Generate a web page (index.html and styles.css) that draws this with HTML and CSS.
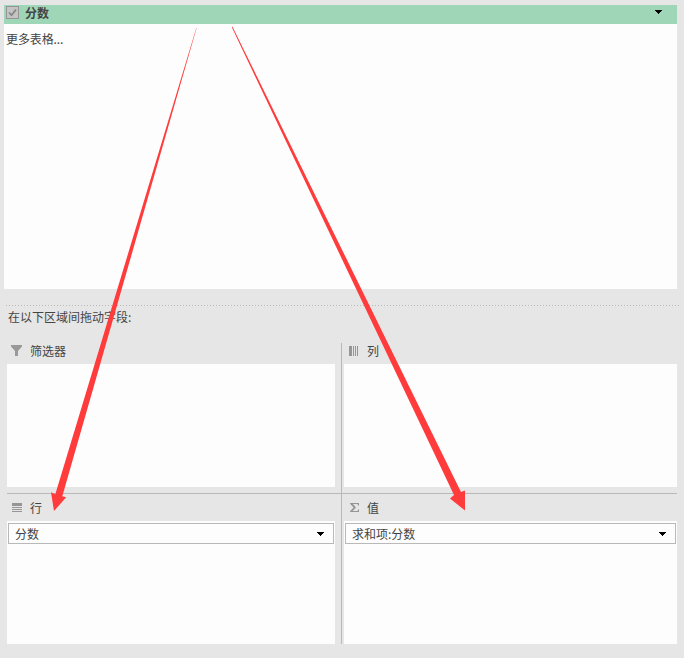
FILE: index.html
```
<!DOCTYPE html>
<html lang="zh-CN">
<head>
<meta charset="utf-8">
<title>数据透视表字段</title>
<link rel="stylesheet" href="styles.css">
</head>
<body>
<main class="pane">
  <section class="fields">
    <div class="field">
      <svg class="check" width="13" height="13" viewBox="0 0 13 13"><rect x=".5" y=".5" width="12" height="12" fill="#c4c4c4" stroke="#949494"/><path d="M3 6.5 5.5 9.2 10 3.6" fill="none" stroke="#858585" stroke-width="1.7"/></svg>
      <span class="field-name">分数</span>
      <svg class="caret" width="7" height="4" viewBox="0 0 7 4" shape-rendering="crispEdges"><path d="M0 0H7V1H6V2H5V3H4V4H3V3H2V2H1V1H0Z"/></svg>
    </div>
    <div class="more">更多表格...</div>
  </section>
  <div class="dots"></div>
  <p class="hint">在以下区域间拖动字段:</p>
  <div class="areas">
    <section class="area">
      <h2 class="title"><svg class="icon" width="12" height="12" viewBox="0 0 12 12"><path d="M1 0H12V1.5L8 6V11H5V6L1 1.5Z" fill="#999"/></svg>筛选器</h2>
      <div class="drop"></div>
    </section>
    <section class="area right">
      <h2 class="title"><svg class="icon" width="12" height="12" viewBox="0 0 12 12" shape-rendering="crispEdges"><path d="M1 1H4V11H1ZM5 1H6V11H5ZM7 1H8V11H7ZM9 1H10V11H9Z" fill="#969696"/></svg>列</h2>
      <div class="drop"></div>
    </section>
    <section class="area lower">
      <h2 class="title"><svg class="icon" width="12" height="12" viewBox="0 0 12 12" shape-rendering="crispEdges"><path d="M2 1H12V4H2ZM2 5H12V6H2ZM2 7H12V8H2ZM2 9H12V10H2Z" fill="#969696"/></svg>行</h2>
      <div class="drop"><div class="item"><span>分数</span><svg class="caret" width="7" height="4" viewBox="0 0 7 4" shape-rendering="crispEdges"><path d="M0 0H7V1H6V2H5V3H4V4H3V3H2V2H1V1H0Z"/></svg></div></div>
    </section>
    <section class="area right lower">
      <h2 class="title"><svg class="icon" width="12" height="12" viewBox="0 0 12 12"><path d="M2 1H11V3.5H10L9.5 2H5L8 5.4 4.7 9H9.5L10 7.5H11V10H2V9.2L5.6 5.5 2 1.8Z" fill="#969696"/></svg>值</h2>
      <div class="drop"><div class="item"><span>求和项:分数</span><svg class="caret" width="7" height="4" viewBox="0 0 7 4" shape-rendering="crispEdges"><path d="M0 0H7V1H6V2H5V3H4V4H3V3H2V2H1V1H0Z"/></svg></div></div>
    </section>
  </div>
</main>
<svg class="arrows" width="684" height="658" viewBox="0 0 684 658" fill="#ff3b3b">
  <path d="M196.3 28 196.6 28 62.3 496.2 66.2 497.3 54 511 51 492.3 55.3 494.2Z"/>
  <path d="M231.7 27 232.5 26.7 461 492 465 490.5 465 510.5 450 498.5 454 495Z"/>
</svg>
</body>
</html>
```
FILE: styles.css
```
* { box-sizing: border-box; }
body {
  margin: 0;
  width: 684px;
  height: 658px;
  overflow: hidden;
  background: #e6e6e6;
  color: #444;
  font: 12px/18px "Noto Sans CJK SC", sans-serif;
}
.pane { padding: 5px 7px 0 4px; }
.fields { height: 284px; background: #fdfdfd; }
.field {
  display: flex;
  align-items: center;
  height: 19px;
  padding: 0 15px 4px 2px;
  background: #9fd6b7;
}
.field-name { margin-left: 6px; font-weight: 700; }
.caret { flex: none; fill: #000; }
.field .caret { margin: 0 0 2px auto; }
.more { padding: 6px 2px; letter-spacing: -0.1px; }
.dots {
  height: 1px;
  margin: 16px -3px 0 2px;
  background: repeating-linear-gradient(90deg, #b8b8b8 0 1px, transparent 1px 3px);
}
.hint { margin: 2px 0 0 4px; height: 18px; }
.areas {
  display: grid;
  grid-template-columns: 334px 336px;
  grid-template-rows: 150px 151px;
  margin: 17px 0 0 3px;
}
.area {
  display: flex;
  flex-direction: column;
  padding-right: 6px;
}
.right {
  padding: 0 0 0 2px;
  border-left: 1px solid #b9b9b9;
}
.area:not(.lower) { padding-bottom: 6px; }
.lower { border-top: 1px solid #b9b9b9; }
.title {
  display: flex;
  align-items: center;
  flex: none;
  height: 21px;
  margin: 0;
  padding: 0 0 5px 3px;
  font-size: 12px;
  font-weight: 400;
}
.lower .title { height: 27px; padding-bottom: 0; }
.icon { margin-right: 8px; }
.right .icon { margin-right: 7px; }
.right .title { padding-left: 4px; }
.drop { flex: 1; padding: 2px 1px; background: #fdfdfd; }
.item {
  display: flex;
  align-items: center;
  justify-content: space-between;
  height: 21px;
  padding: 0 9px 0 6px;
  border: 1px solid #b9b9b9;
}
.arrows { position: absolute; top: 0; left: 0; }
```
